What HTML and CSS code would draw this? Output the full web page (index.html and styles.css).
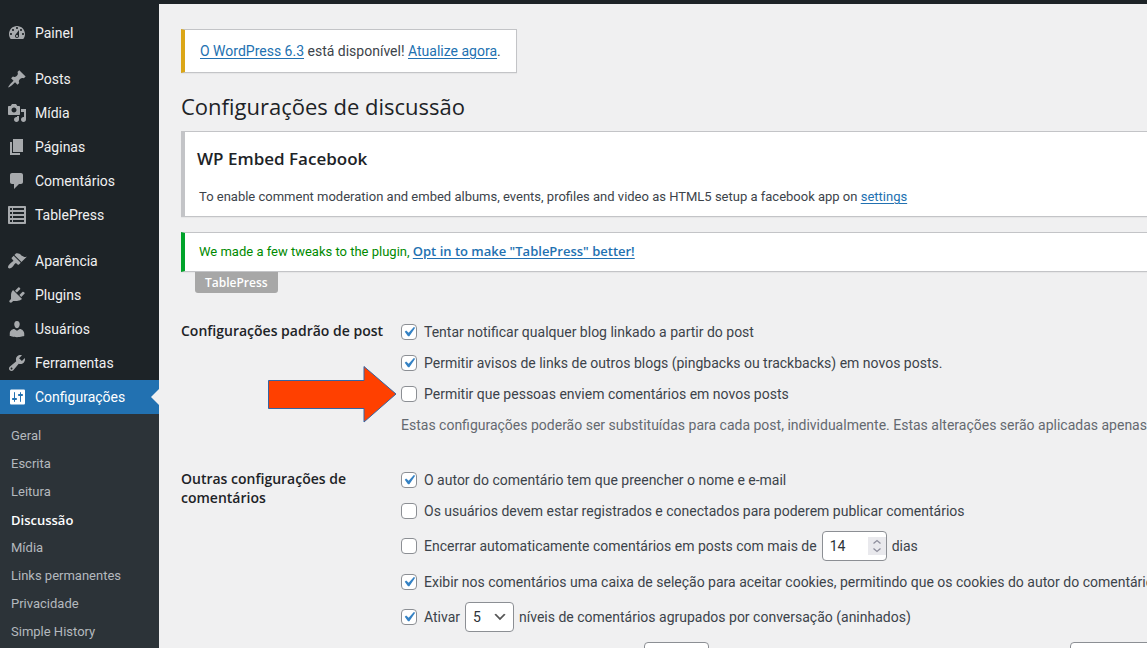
FILE: index.html
```html
<!DOCTYPE html>
<html lang="pt-BR">
  <head>
    <meta charset="UTF-8" />
    <meta name="viewport" content="width=device-width, initial-scale=1.0" />
    <title>Configurações de discussão</title>
    <link rel="stylesheet" href="styles.css">
  </head>
  <body>
    <div class="admin-bar"></div>
    <div class="layout">
      <nav class="menu">
        <ul class="menu-list">
          <li><a href="#"><svg viewBox="0 0 20 20"><path fill-rule="evenodd" d="M3.76 16h12.48c1.1-1.37 1.76-3.11 1.76-5 0-4.42-3.58-8-8-8s-8 3.58-8 8c0 1.89.66 3.63 1.76 5zM10 4c.55 0 1 .45 1 1s-.45 1-1 1-1-.45-1-1 .45-1 1-1zM6 6c.55 0 1 .45 1 1s-.45 1-1 1-1-.45-1-1 .45-1 1-1zm8 0c.55 0 1 .45 1 1s-.45 1-1 1-1-.45-1-1 .45-1 1-1zm-5.37 5.55L12 7v6c0 1.1-.9 2-2 2s-2-.9-2-2c0-.57.24-1.08.63-1.45zM4 10c.55 0 1 .45 1 1s-.45 1-1 1-1-.45-1-1 .45-1 1-1zm12 0c.55 0 1 .45 1 1s-.45 1-1 1-1-.45-1-1 .45-1 1-1zm-5 3c0-.55-.45-1-1-1s-1 .45-1 1 .45 1 1 1 1-.45 1-1z"/></svg>Painel</a></li>
          <li class="separator"></li>
          <li><a href="#"><svg viewBox="0 0 20 20"><path d="M10.44 3.02l1.82-1.82 6.36 6.35-1.83 1.82c-1.05-.68-2.48-.57-3.41.36l-.75.75c-.92.93-1.04 2.35-.35 3.41l-1.83 1.82-2.41-2.41-2.8 2.79c-.42.42-3.38 2.71-3.8 2.29s1.86-3.39 2.28-3.81l2.79-2.79L4.1 9.36l1.83-1.82c1.05.69 2.48.57 3.4-.36l.75-.75c.93-.92 1.05-2.35.36-3.41z"/></svg>Posts</a></li>
          <li><a href="#"><svg viewBox="0 0 20 20"><path fill-rule="evenodd" d="M13 11V4c0-.55-.45-1-1-1h-1.67L9 1H5L3.67 3H2c-.55 0-1 .45-1 1v7c0 .55.45 1 1 1h10c.55 0 1-.45 1-1zM7 4.5c1.38 0 2.5 1.12 2.5 2.5S8.38 9.5 7 9.5 4.5 8.38 4.5 7 5.62 4.5 7 4.5zM14 6h5v10.5c0 1.38-1.12 2.5-2.5 2.5S14 17.88 14 16.5s1.12-2.5 2.5-2.5c.17 0 .34.02.5.05V9h-3V6zm-4 8.05V13h2v3.5c0 1.38-1.12 2.5-2.5 2.5S7 17.88 7 16.5 8.12 14 9.5 14c.17 0 .34.02.5.05z"/></svg>Mídia</a></li>
          <li><a href="#"><svg viewBox="0 0 20 20"><path d="M6 15V2h10v13H6zm-1 1h8v2H3V5h2v11z"/></svg>Páginas</a></li>
          <li><a href="#"><svg viewBox="0 0 20 20"><path d="M5 2h9c1.1 0 2 .9 2 2v7c0 1.1-.9 2-2 2h-2l-5 5v-5H5c-1.1 0-2-.9-2-2V4c0-1.1.9-2 2-2z"/></svg>Comentários</a></li>
          <li><a href="#"><svg viewBox="0 0 20 20"><path fill-rule="evenodd" d="M2 1h16c.55 0 1 .45 1 1v16c0 .55-.45 1-1 1H2c-.55 0-1-.45-1-1V2c0-.55.45-1 1-1zM3 3v2h2V3zM6 3v2h11V3zM3 7v2h2V7zM6 7v2h11V7zM3 11v2h2v-2zM6 11v2h11v-2zM3 15v2h2v-2zM6 15v2h11v-2z"/></svg>TablePress</a></li>
          <li class="separator"></li>
          <li><a href="#"><svg viewBox="0 0 20 20"><path d="M14.48 11.06L7.41 3.99l1.5-1.5c.5-.56 2.3-.47 3.51.32 1.21.8 1.43 1.28 2.91 2.1 1.18.64 2.45 1.26 4.45.85zm-.71.71L6.7 4.7 4.93 6.47c-.39.39-.39 1.02 0 1.41l1.06 1.06c.39.39.39 1.03 0 1.42-.6.6-1.43 1.11-2.21 1.69-.35.26-.7.53-1.01.84C1.43 14.23.4 16.08 1.4 17.07c.99 1 2.84-.03 4.18-1.36.31-.31.58-.66.85-1.02.57-.78 1.08-1.61 1.69-2.21.39-.39 1.02-.39 1.41 0l1.06 1.06c.39.39 1.02.39 1.41 0z"/></svg>Aparência</a></li>
          <li><a href="#"><svg viewBox="0 0 20 20"><path d="M13.11 4.36L9.87 7.6 8 5.73l3.24-3.24c.35-.34 1.05-.2 1.56.32.52.51.66 1.21.31 1.55zm-8 1.77l.91-1.12 9.01 9.01-1.19.84c-.71.71-2.63 1.16-3.82 1.16H6.14L4.9 17.26c-.59.59-1.54.59-2.12 0-.59-.58-.59-1.53 0-2.12l1.24-1.24v-3.88c0-1.13.4-3.19 1.09-3.89zm7.26 3.97l3.24-3.24c.34-.35 1.04-.21 1.55.31.52.51.66 1.21.31 1.55l-3.24 3.25z"/></svg>Plugins</a></li>
          <li><a href="#"><svg viewBox="0 0 20 20"><path d="M10 9.25c-2.27 0-2.73-3.44-2.73-3.44C7 4.02 7.82 2 9.97 2c2.16 0 2.98 2.02 2.71 3.81 0 0-.41 3.44-2.68 3.44zm0 2.57L12.72 10c2.39 0 4.52 2.33 4.52 4.53v2.49s-3.65 1.13-7.24 1.13c-3.65 0-7.24-1.13-7.24-1.13v-2.49c0-2.25 1.94-4.48 4.47-4.48z"/></svg>Usuários</a></li>
          <li><a href="#"><svg viewBox="0 0 20 20"><path fill-rule="evenodd" d="M16.68 9.77c-1.34 1.34-3.3 1.67-4.95.99l-5.41 6.52c-.99.99-2.59.99-3.58 0s-.99-2.59 0-3.57l6.52-5.42c-.68-1.65-.35-3.61.99-4.95 1.28-1.28 3.12-1.62 4.72-1.06l-2.89 2.89 2.82 2.82 2.86-2.87c.53 1.58.18 3.39-1.08 4.65zM3.81 16.21c.4.39 1.04.39 1.43 0 .4-.4.4-1.04 0-1.43-.39-.4-1.03-.4-1.43 0-.39.39-.39 1.03 0 1.43z"/></svg>Ferramentas</a></li>
          <li><a class="current" href="#"><svg viewBox="0 0 20 20"><path fill-rule="evenodd" d="M18 16V4c0-1.100-.5-1.500-1.500-1.500h-12C3.500 2.500 3 3 3 4v12c0 1 .5 1.500 1.500 1.500h12c1 0 1.500-.5 1.500-1.500zM8 11h1c.55 0 1 .45 1 1s-.45 1-1 1H8v1.500c0 .28-.22.5-.5.5s-.5-.22-.5-.5V13H6c-.55 0-1-.45-1-1s.45-1 1-1h1V5.500c0-.28.22-.5.5-.5s.5.22.5.5V11zm5-2h-1c-.55 0-1-.45-1-1s.45-1 1-1h1V5.500c0-.28.22-.5.5-.5s.5.22.5.5V7h1c.55 0 1 .45 1 1s-.45 1-1 1h-1v5.500c0 .28-.22.5-.5.5s-.5-.22-.5-.5V9z"/></svg>Configurações</a></li>
        </ul>
        <ul class="submenu">
          <li><a href="#">Geral</a></li>
          <li><a href="#">Escrita</a></li>
          <li><a href="#">Leitura</a></li>
          <li><a class="active" href="#">Discussão</a></li>
          <li><a href="#">Mídia</a></li>
          <li><a href="#">Links permanentes</a></li>
          <li><a href="#">Privacidade</a></li>
          <li><a href="#">Simple History</a></li>
        </ul>
      </nav>

      <main class="content">
        <div class="update-nag"><a href="#">O WordPress 6.3</a> está disponível! <a href="#">Atualize agora</a>.</div>
        <h1>Configurações de discussão</h1>

        <div class="notice notice-embed">
          <h2>WP Embed Facebook</h2>
          <p>To enable comment moderation and embed albums, events, profiles and video as HTML5 setup a facebook app on <a href="#">settings</a></p>
        </div>
        <div class="notice notice-success">
          <p>We made a few tweaks to the plugin, <a href="#">Opt in to make "TablePress" better!</a></p>
        </div>
        <span class="plugin-tag">TablePress</span>

        <form class="settings">
          <section class="setting">
            <h3>Configurações padrão de post</h3>
            <div class="options">
              <div class="option">
                <input type="checkbox" id="pingback" checked>
                <label for="pingback">Tentar notificar qualquer blog linkado a partir do post</label>
              </div>
              <div class="option">
                <input type="checkbox" id="ping-status" checked>
                <label for="ping-status">Permitir avisos de links de outros blogs (pingbacks ou trackbacks) em novos posts.</label>
              </div>
              <div class="option pointed">
                <svg class="arrow" viewBox="0 0 129 58"><path d="M.5 15.500H96V1.500L128 29 96 57V43.500H.5z"/></svg>
                <input type="checkbox" id="comment-status">
                <label for="comment-status">Permitir que pessoas enviem comentários em novos posts</label>
              </div>
              <p class="description">Estas configurações poderão ser substituídas para cada post, individualmente. Estas alterações serão aplicadas apenas</p>
            </div>
          </section>

          <section class="setting">
            <h3>Outras configurações de comentários</h3>
            <div class="options">
              <div class="option">
                <input type="checkbox" id="require-name" checked>
                <label for="require-name">O autor do comentário tem que preencher o nome e e-mail</label>
              </div>
              <div class="option">
                <input type="checkbox" id="registration">
                <label for="registration">Os usuários devem estar registrados e conectados para poderem publicar comentários</label>
              </div>
              <div class="option tall">
                <input type="checkbox" id="close-old">
                <label for="close-old">Encerrar automaticamente comentários em posts com mais de</label>
                <input type="number" id="close-days" value="14" aria-label="Dias">
                <label for="close-days">dias</label>
              </div>
              <div class="option">
                <input type="checkbox" id="cookies" checked>
                <label for="cookies">Exibir nos comentários uma caixa de seleção para aceitar cookies, permitindo que os cookies do autor do comentário</label>
              </div>
              <div class="option tall">
                <input type="checkbox" id="thread" checked>
                <label for="thread">Ativar</label>
                <select id="thread-depth">
                  <option>5</option>
                </select>
                <label for="thread-depth">níveis de comentários agrupados por conversação (aninhados)</label>
              </div>
              <div class="option tall">
                <input type="checkbox" id="paged">
                <label for="paged">Dividir comentários em páginas de</label>
                <input type="number" id="per-page" value="50" aria-label="Comentários por página">
                <label for="per-page">comentários de nível mais alto por página, com a página</label>
                <select class="wide" aria-label="Página padrão">
                  <option>última</option>
                </select>
              </div>
            </div>
          </section>
        </form>
      </main>
    </div>
  </body>
</html>
```
FILE: styles.css
```css
* {
  box-sizing: border-box;
}

body {
  margin: 0;
  height: 100vh;
  overflow: hidden;
  display: flex;
  flex-direction: column;
  background: #f0f0f1;
  color: #3c434a;
  font-family: Roboto, sans-serif;
  font-size: 14px;
  line-height: 20px;
}

a {
  color: #2271b1;
  text-underline-offset: 2px;
}

h1,
h2,
h3,
.notice-success a,
.plugin-tag,
.submenu .active {
  font-family: "Open Sans", sans-serif;
}

.admin-bar {
  flex: none;
  height: 4px;
  background: #1d2327;
}

.layout {
  flex: 1;
  min-height: 0;
  display: flex;
}

/* Side menu */
.menu {
  flex: none;
  width: 159px;
  display: flex;
  flex-direction: column;
  background: #1d2327;
}

.menu ul {
  margin: 0;
  padding: 0;
  list-style: none;
}

.menu a {
  display: flex;
  align-items: center;
  text-decoration: none;
}

.menu .menu-list {
  padding-top: 12px;
}

.menu-list a {
  position: relative;
  height: 34px;
  padding-left: 7px;
  gap: 8px;
  color: #f0f0f1;
}

.menu-list svg {
  width: 20px;
  height: 20px;
  fill: #a7aaad;
}

.separator {
  height: 12px;
}

.menu-list .current {
  background: #2271b1;
  color: #fff;
}

.menu-list .current svg {
  fill: #fff;
}

.current::after {
  content: "";
  position: absolute;
  right: 0;
  top: 9px;
  border: 8px solid transparent;
  border-left: 0;
  border-right-color: #f0f0f1;
}

.menu .submenu {
  flex: 1;
  padding-top: 8px;
  background: #2c3338;
}

.submenu a {
  height: 28px;
  padding-left: 11px;
  color: #b4b9be;
  font-size: 13px;
}

.submenu .active {
  color: #fff;
  font-weight: 600;
}

/* Page content */
.content {
  flex: 1;
  min-width: 0;
  overflow: hidden;
  padding: 25px 0 0 22px;
  white-space: nowrap;
}

.update-nag,
.notice {
  background: #fff;
  border: 1px solid #c3c4c7;
  border-left-width: 4px;
  box-shadow: 0 1px 1px rgba(0, 0, 0, 0.04);
}

.update-nag {
  width: fit-content;
  padding: 11px 15px;
  border-left-color: #dba617;
}

h1 {
  margin: 19px 0 11px;
  color: #1d2327;
  font-size: 22px;
  font-weight: 400;
  line-height: 28px;
}

.notice {
  border-right: 0;
  font-size: 13px;
}

.notice p {
  margin: 0;
}

.notice-embed {
  padding: 17px 14px 9px 12px;
  margin-bottom: 15px;
}

.notice-embed h2 {
  margin: 0 0 18px;
  color: #1d2327;
  font-size: 17px;
  font-weight: 600;
  line-height: 20px;
}

.notice-embed p {
  padding-left: 2px;
}

.notice-success {
  padding: 8px 14px 9px;
  border-left-color: #00a32a;
  color: #008a00;
}

.notice-success a {
  font-weight: 600;
}

.plugin-tag {
  display: block;
  width: fit-content;
  margin-left: 14px;
  padding: 0 10px;
  border-radius: 0 0 3px 3px;
  background: #a7a7a7;
  color: #fff;
  font-size: 12px;
  font-weight: 600;
  line-height: 21px;
}

/* Settings form */
.settings {
  margin-top: 23px;
}

.setting {
  display: grid;
  grid-template-columns: 210px 1fr;
  column-gap: 10px;
  margin-bottom: 29px;
}

.setting h3 {
  margin: 5px 0 0;
  color: #1d2327;
  font-size: 14px;
  font-weight: 600;
  line-height: 19px;
  white-space: normal;
}

.options {
  min-width: 0;
}

.option {
  display: flex;
  align-items: center;
  height: 31px;
}

.option.tall {
  height: 40px;
}

.description {
  margin: 6px 0 0;
  color: #646970;
}

.pointed {
  position: relative;
}

/* Callout arrow over the page */
.arrow {
  position: absolute;
  left: -133px;
  top: -13px;
  width: 129px;
  height: 58px;
  fill: #ff4000;
  stroke: #3465a4;
}

input[type="checkbox"] {
  appearance: none;
  flex: none;
  width: 16px;
  height: 16px;
  margin: 0 7px 0 0;
  border: 1px solid #8c8f94;
  border-radius: 4px;
  background: #fff;
}

input[type="checkbox"]:checked {
  background: #fff url("data:image/svg+xml,%3Csvg xmlns='http://www.w3.org/2000/svg' viewBox='0 0 20 20'%3E%3Cpath d='M14.830 4.890l1.340.940-5.810 8.380H9.020L5.780 9.670l1.340-1.250 2.570 2.400z' fill='%233582c4'/%3E%3C/svg%3E") center / 20px no-repeat;
}

input[type="number"],
select {
  appearance: none;
  flex: none;
  height: 30px;
  margin: 0 5px;
  padding: 0 7px;
  border: 1px solid #8c8f94;
  border-radius: 4px;
  color: #2c3338;
  font: inherit;
}

input[type="number"] {
  appearance: textfield;
  width: 65px;
  background: #fff url("data:image/svg+xml,%3Csvg xmlns='http://www.w3.org/2000/svg' width='18' height='18'%3E%3Cpath d='M0 0h18v18H0z' fill='%23e9e9ed'/%3E%3Cpath d='M5.500 6.500l3.500-3 3.500 3M5.500 11.500l3.500 3 3.500-3' fill='none' stroke='%238f8f9d' stroke-width='1.300'/%3E%3C/svg%3E") right center no-repeat;
}

select {
  width: 49px;
  background: #fff url("data:image/svg+xml,%3Csvg xmlns='http://www.w3.org/2000/svg' viewBox='0 0 20 20'%3E%3Cpath d='M5 6l5 5 5-5 2 1-7 7-7-7 2-1z' fill='%23555'/%3E%3C/svg%3E") right 5px center / 16px no-repeat;
}

select.wide {
  width: 100px;
}
```
